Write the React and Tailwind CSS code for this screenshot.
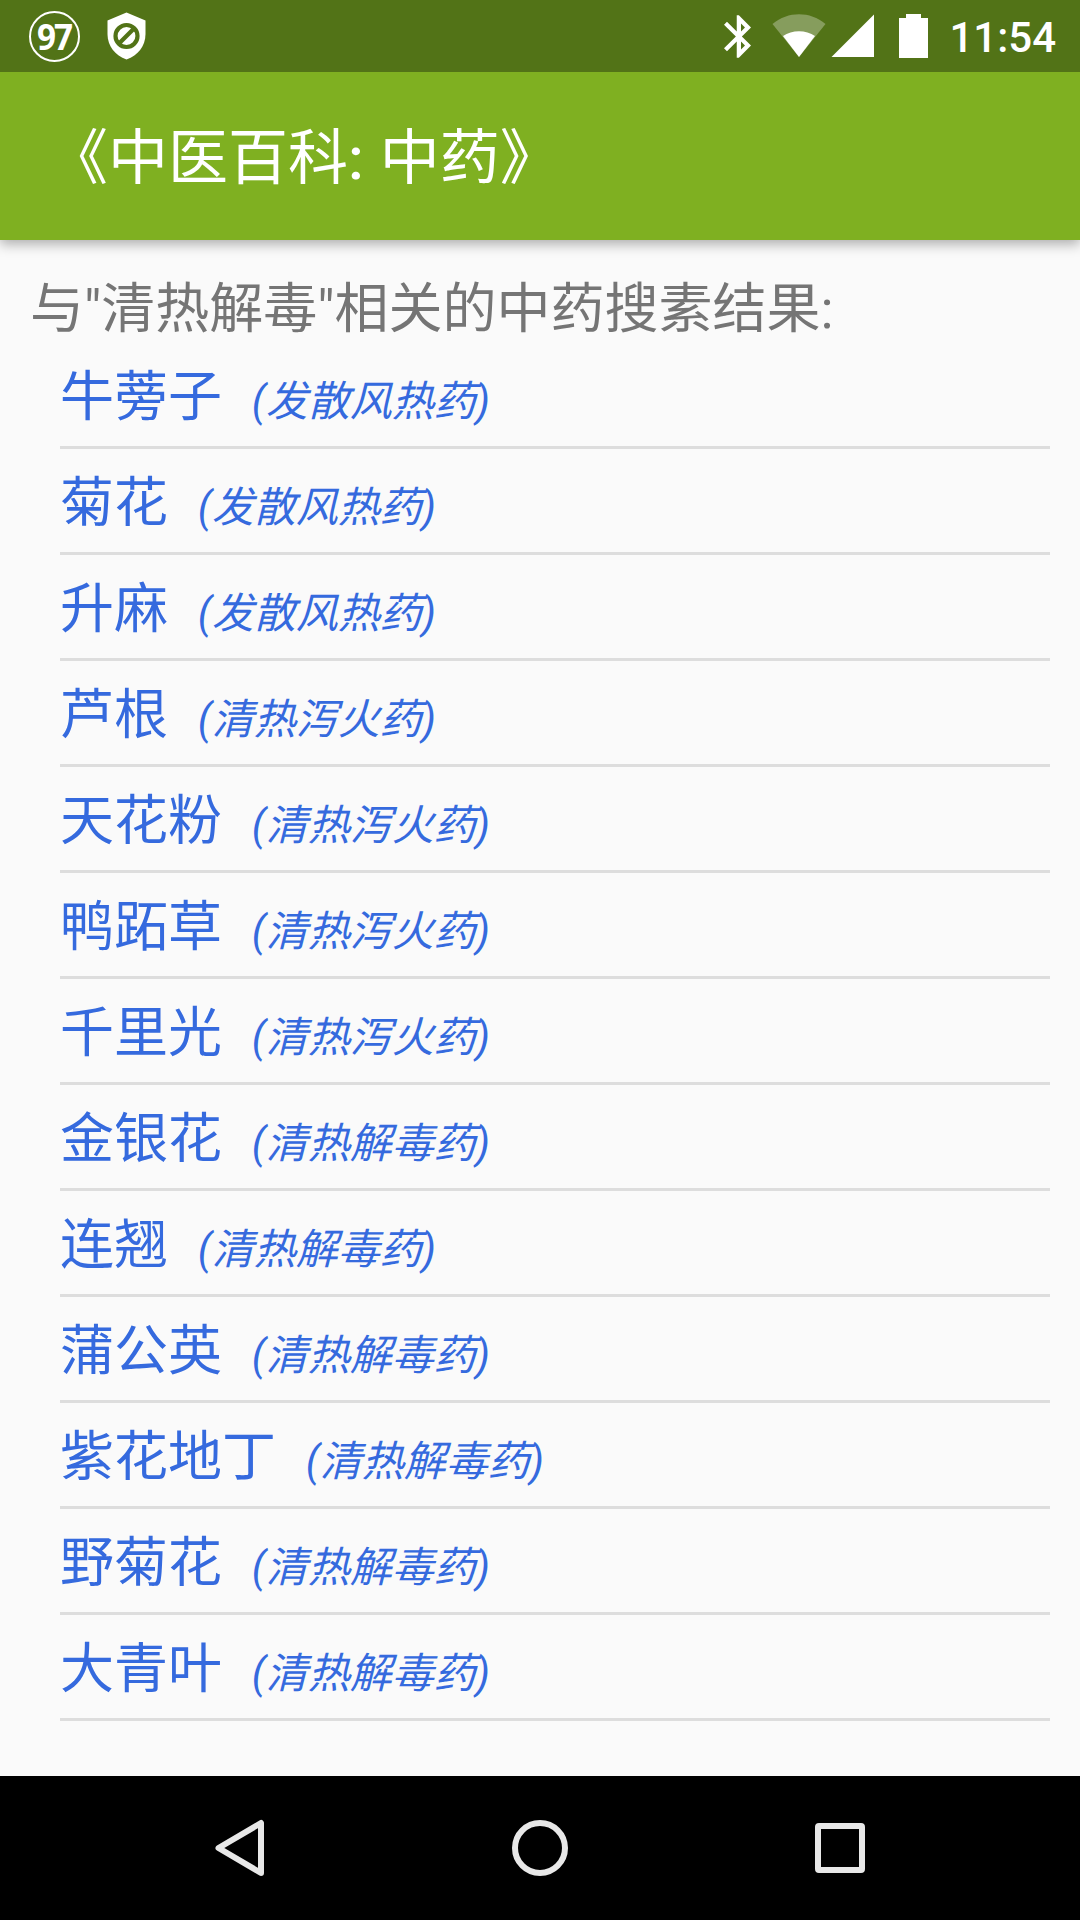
import React from 'react';

const herbs = [
  { name: '牛蒡子', category: '发散风热药' },
  { name: '菊花', category: '发散风热药' },
  { name: '升麻', category: '发散风热药' },
  { name: '芦根', category: '清热泻火药' },
  { name: '天花粉', category: '清热泻火药' },
  { name: '鸭跖草', category: '清热泻火药' },
  { name: '千里光', category: '清热泻火药' },
  { name: '金银花', category: '清热解毒药' },
  { name: '连翘', category: '清热解毒药' },
  { name: '蒲公英', category: '清热解毒药' },
  { name: '紫花地丁', category: '清热解毒药' },
  { name: '野菊花', category: '清热解毒药' },
  { name: '大青叶', category: '清热解毒药' },
];

const StatusBar = () => (
  <div className="relative z-20 flex h-[72px] shrink-0 items-center justify-between bg-[#527317] pl-[29px] pr-[24px] text-white">
    <div className="flex items-center gap-[27px]">
      <div className="flex size-[51px] items-center justify-center rounded-full border-[2.5px] border-white font-['Noto_Sans'] text-[35px] leading-none font-bold tracking-[-2px]">
        <span className="mr-[1px] inline-block scale-x-[0.95]">97</span>
      </div>
      <svg width="39" height="48" viewBox="0 0 39 48">
        <path d="M19.5 0.5 L38.5 8.5 V22 C38.5 34 31 43.5 19.5 47.5 C8 43.5 0.5 34 0.5 22 V8.5 Z" fill="white" />
        <circle cx="19.5" cy="24" r="11" fill="none" stroke="#527317" strokeWidth="4.2" />
        <path d="M12 31.5 L27 16.5" stroke="#527317" strokeWidth="4.2" />
      </svg>
    </div>

    <div className="flex items-center">
      <svg width="27" height="43" viewBox="5 2 12.71 20" className="mr-[21px]">
        <path
          d="M17.71 7.71L12 2h-1v7.59L6.41 5 5 6.41 10.59 12 5 17.59 6.41 19 11 14.41V22h1l5.71-5.71-4.3-4.29 4.3-4.29zM13 5.83l1.88 1.88L13 9.59V5.83zm1.88 10.46L13 18.17v-3.76l1.88 1.88z"
          fill="white"
        />
      </svg>
      <svg width="54" height="44" viewBox="0 0 54 44" className="mr-[5px]">
        <path d="M27 43 L0.5 10 C16 -3 38 -3 53.5 10 Z" fill="white" fillOpacity="0.3" />
        <path d="M27 43 L11 22 C20 15.5 34 15.5 43 22 Z" fill="white" />
      </svg>
      <svg width="43" height="44" viewBox="0 0 43 44" className="mr-[25px]">
        <path d="M43 0.5 V43 H0.5 Z" fill="white" />
      </svg>
      <svg width="29" height="44" viewBox="0 0 29 44" className="mr-[21px]">
        <path d="M7 0 H22 V4 H29 V44 H0 V4 H7 Z" fill="white" />
      </svg>
      <span className="pt-[4px] font-[Roboto] text-[42px] leading-[48px] font-medium">11:54</span>
    </div>
  </div>
);

const AppBar = () => (
  <header className="relative z-10 flex h-[168px] shrink-0 items-center bg-[#7fb021] pt-[6px] pl-[48px] shadow-[0_4px_12px_rgba(0,0,0,0.32)]">
    <h1 className="text-[60px] leading-[88px] whitespace-pre text-white">
      《中医百科<span className="font-medium [word-spacing:1px]">: </span>中药》
    </h1>
  </header>
);

const HerbRow = ({ name, category }) => (
  <li className="h-[106px] border-b-[3px] border-[#dddddd] pt-[7px] whitespace-pre text-[#356ade]">
    <a className="block text-[54px] leading-[96px]">
      {name}{'  '}
      <em className="ml-[3px] text-[42px]">({category})</em>
    </a>
  </li>
);

const NavBar = () => (
  <nav className="flex h-[144px] shrink-0 items-center justify-center gap-[240px] bg-black">
    <svg width="60" height="60" viewBox="0 0 60 60">
      <path d="M51 5 V55 L8.5 30 Z" fill="none" stroke="#e8e8e8" strokeWidth="6" strokeLinejoin="round" />
    </svg>
    <svg width="60" height="60" viewBox="0 0 60 60">
      <circle cx="30" cy="30" r="25" fill="none" stroke="#e8e8e8" strokeWidth="6" />
    </svg>
    <svg width="60" height="60" viewBox="0 0 60 60">
      <rect x="8" y="8" width="44" height="44" rx="1" fill="none" stroke="#e8e8e8" strokeWidth="6" />
    </svg>
  </nav>
);

const App = () => {
  return (
    <div className="flex h-[1920px] w-[1080px] flex-col overflow-hidden bg-[#fafafa] font-[Roboto,'Noto_Sans_CJK_SC',sans-serif]" lang="zh-CN">
      <StatusBar />
      <AppBar />
      <main className="grow">
        <h2 className="h-[103px] pt-[30px] pl-[30px] text-[54px] leading-[80px] whitespace-pre text-[#757575]">
          与"清热解毒"相关的中药搜素结果:
        </h2>
        <ul className="pr-[30px] pl-[60px]">
          {herbs.map((herb) => (
            <HerbRow key={herb.name} name={herb.name} category={herb.category} />
          ))}
        </ul>
      </main>
      <NavBar />
    </div>
  );
};

export default App;
